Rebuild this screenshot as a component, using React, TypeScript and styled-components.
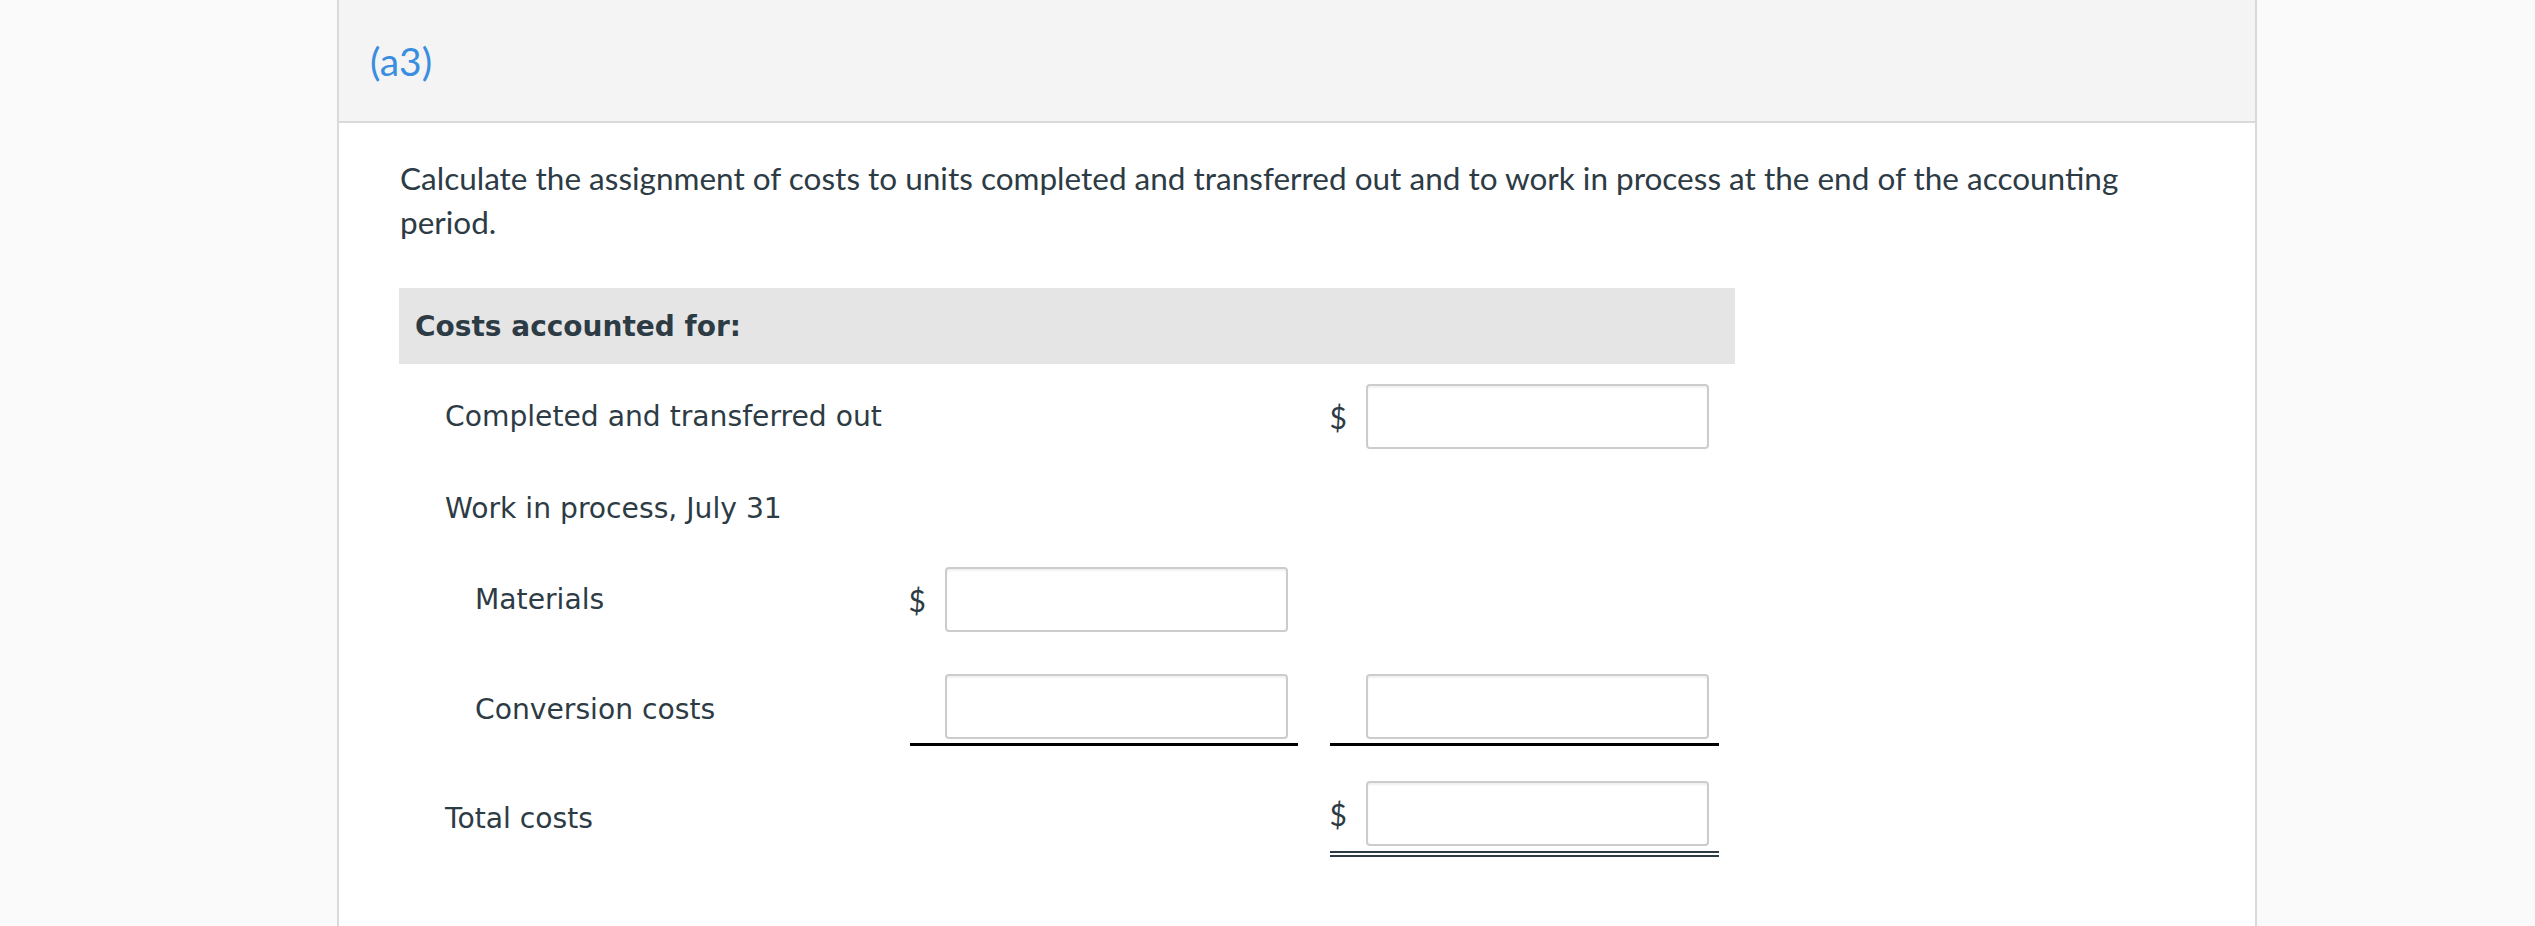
import React from "react";
import styled, { createGlobalStyle } from "styled-components";

const Global = createGlobalStyle`
  html, body {
    margin: 0;
    padding: 0;
    background: #fafafa;
  }
  body {
    font-family: "Lato", "Noto Sans", sans-serif;
    color: #2d3b45;
  }
`;

const Panel = styled.section`
  margin-left: 337px;
  width: 1916px;
  min-height: 926px;
  background: #ffffff;
  border-left: 2px solid #d9d9d9;
  border-right: 2px solid #d9d9d9;
`;

const Header = styled.header`
  height: 121px;
  display: flex;
  align-items: center;
  padding-left: 31px;
  background: #f4f4f4;
  border-bottom: 2px solid #dadada;
`;

const PartTitle = styled.h2`
  margin: 0;
  font-family: "Lato", sans-serif;
  font-weight: 400;
  font-size: 39px;
  color: #3a8ddf;
`;

const Body = styled.div`
  padding: 33px 61px 40px 61px;
`;

const Prompt = styled.p`
  max-width: 1750px;
  margin: 0 0 44px 0;
  font-family: "Lato", sans-serif;
  font-size: 31.5px;
  line-height: 44px;
  color: #2d3b45;
`;

const Table = styled.div`
  width: 1336px;
  margin-left: -1px;
  font-family: "DejaVu Sans", "Noto Sans", sans-serif;
  color: #2d3b45;
`;

const TableHead = styled.div`
  height: 76px;
  display: flex;
  align-items: center;
  padding-left: 16px;
  background: #e5e5e5;
  font-weight: 700;
  font-size: 28px;
`;

const Row = styled.div<{ $mt: number }>`
  display: grid;
  grid-template-columns: 479px 388px 389px;
  column-gap: 32px;
  align-items: center;
  margin-top: ${(p) => p.$mt}px;
`;

const Label = styled.div<{ $indent: number }>`
  padding-left: ${(p) => p.$indent}px;
  font-size: 28.2px;
  line-height: 40px;
  white-space: nowrap;
`;

const Cell = styled.div<{ $rule?: "single" | "double" }>`
  display: flex;
  align-items: center;
  justify-content: flex-end;
  gap: 19px;
  padding-right: 10px;
  padding-bottom: ${(p) => (p.$rule === "single" ? 4 : p.$rule === "double" ? 5 : 0)}px;
  border-bottom: ${(p) =>
    p.$rule === "single"
      ? "3px solid #000000"
      : p.$rule === "double"
      ? "6px double #2d3b45"
      : "none"};
`;

const Dollar = styled.span`
  font-family: "Lato", sans-serif;
  font-size: 30px;
  color: #2d3b45;
`;

const Field = styled.input`
  box-sizing: border-box;
  width: 343px;
  height: 65px;
  margin: 0;
  padding: 0 12px;
  border: 2px solid #cccccc;
  border-radius: 4px;
  background: #ffffff;
  box-shadow: inset 0 2px 2px rgba(0, 0, 0, 0.06);
  font-size: 26px;
  outline: none;
`;

export default function App() {
  return (
    <>
      <Global />
      <Panel>
        <Header>
          <PartTitle>(a3)</PartTitle>
        </Header>
        <Body>
          <Prompt>
            Calculate the assignment of costs to units completed and transferred out and to work in
            process at the end of the accounting period.
          </Prompt>
          <Table>
            <TableHead>Costs accounted for:</TableHead>
            <Row $mt={20}>
              <Label $indent={46}>Completed and transferred out</Label>
              <div />
              <Cell>
                <Dollar>$</Dollar>
                <Field type="text" aria-label="Completed and transferred out" />
              </Cell>
            </Row>
            <Row $mt={40}>
              <Label $indent={46}>Work in process, July 31</Label>
            </Row>
            <Row $mt={38}>
              <Label $indent={76}>Materials</Label>
              <Cell>
                <Dollar>$</Dollar>
                <Field type="text" aria-label="Materials" />
              </Cell>
              <div />
            </Row>
            <Row $mt={42}>
              <Label $indent={76}>Conversion costs</Label>
              <Cell $rule="single">
                <Field type="text" aria-label="Conversion costs" />
              </Cell>
              <Cell $rule="single">
                <Field type="text" aria-label="Work in process total" />
              </Cell>
            </Row>
            <Row $mt={35}>
              <Label $indent={46}>Total costs</Label>
              <div />
              <Cell $rule="double">
                <Dollar>$</Dollar>
                <Field type="text" aria-label="Total costs" />
              </Cell>
            </Row>
          </Table>
        </Body>
      </Panel>
    </>
  );
}
